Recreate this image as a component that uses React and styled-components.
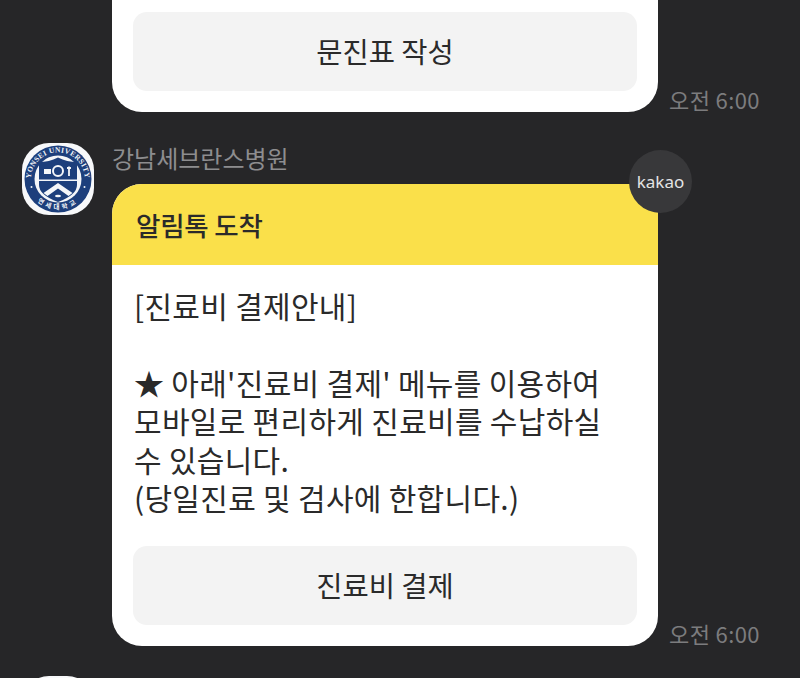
import React from "react";
import styled, { createGlobalStyle } from "styled-components";

const FONT = `"Noto Sans CJK KR", "Noto Sans", sans-serif`;

const GlobalStyle = createGlobalStyle`
  html, body {
    margin: 0;
    padding: 0;
    background: #262628;
  }
`;

function Seal() {
  return (
    <svg width="72" height="72" viewBox="0 0 72 72">
      <rect x="0" y="0" width="72" height="72" rx="27" fill="#f7f8fa" />
      <circle cx="36" cy="36" r="33.5" fill="#1d3f7c" />
      <circle cx="36" cy="36" r="23.5" fill="#f4f6f9" />
      <defs>
        <path id="sealTop" d="M9.4 41 A27 27 0 1 1 62.6 41" />
        <path id="sealBottom" d="M5.5 36 A30.5 30.5 0 0 0 66.5 36" />
      </defs>
      <text fontFamily="Liberation Serif, serif" fontSize="7.5" fontWeight="700" fill="#f4f6f9" letterSpacing="0.3">
        <textPath href="#sealTop" startOffset="50%" textAnchor="middle">YONSEI UNIVERSITY</textPath>
      </text>
      <text fontFamily="Noto Sans CJK KR, sans-serif" fontSize="6.5" fontWeight="700" fill="#f4f6f9" letterSpacing="3">
        <textPath href="#sealBottom" startOffset="50%" textAnchor="middle">연세대학교</textPath>
      </text>
      <circle cx="9.5" cy="44" r="1" fill="#f4f6f9" />
      <circle cx="62.5" cy="44" r="1" fill="#f4f6f9" />
      <path d="M17 19 Q27 19 36 14.5 Q45 19 55 19 V42 Q55 52 36 59 Q17 52 17 42 Z" fill="#1d3f7c" />
      <path d="M17 36.5 H55 V38 H17 Z" fill="#f4f6f9" />
      <path d="M21.5 50 L36 40 L50.5 50 L46.5 53 L36 45.5 L25.5 53 Z" fill="#f4f6f9" />
      <circle cx="36" cy="28" r="5" fill="none" stroke="#f4f6f9" strokeWidth="2" />
      <rect x="22" y="26" width="7" height="5" fill="#f4f6f9" />
      <path d="M47 23.5 V33 M45 25 H49" stroke="#f4f6f9" strokeWidth="1.8" fill="none" />
      <ellipse cx="36" cy="53" rx="3" ry="1.3" fill="#f4f6f9" />
    </svg>
  );
}

export default function App() {
  return (
    <>
      <GlobalStyle />
      <Page>
        <CutRow>
          <Bubble $cut>
            <Body>
              <ActionButton>문진표 작성</ActionButton>
            </Body>
          </Bubble>
          <Time>오전 6:00</Time>
        </CutRow>

        <MessageRow>
          <Avatar>
            <Seal />
          </Avatar>
          <Column>
            <Sender>강남세브란스병원</Sender>
            <BubbleLine>
              <Bubble>
                <Header>알림톡 도착</Header>
                <Body>
                  <Message>
                    [진료비 결제안내]
                    {"\n\n"}★ 아래'진료비 결제' 메뉴를 이용하여
                    {"\n"}모바일로 편리하게 진료비를 수납하실
                    {"\n"}수 있습니다.
                    {"\n"}(당일진료 및 검사에 한합니다.)
                  </Message>
                  <ActionButton>진료비 결제</ActionButton>
                </Body>
                <KakaoBadge>kakao</KakaoBadge>
              </Bubble>
              <Time>오전 6:00</Time>
            </BubbleLine>
          </Column>
        </MessageRow>

        <NextAvatar />
      </Page>
    </>
  );
}

const Page = styled.div`
  width: 800px;
  height: 678px;
  overflow: hidden;
  background: #262628;
  font-family: ${FONT};
  display: flex;
  flex-direction: column;
`;

const CutRow = styled.div`
  display: flex;
  align-items: flex-end;
  gap: 11px;
  padding-left: 112px;
`;

const MessageRow = styled.div`
  display: flex;
  align-items: flex-start;
  gap: 18px;
  padding: 31px 0 0 22px;
`;

const Avatar = styled.div`
  width: 72px;
  height: 72px;
  flex: none;
`;

const Column = styled.div`
  display: flex;
  flex-direction: column;
`;

const Sender = styled.div`
  height: 41px;
  font-size: 24px;
  line-height: 30px;
  color: #8d8d8f;
`;

const BubbleLine = styled.div`
  display: flex;
  align-items: flex-end;
  gap: 11px;
`;

const Bubble = styled.div`
  position: relative;
  width: 546px;
  flex: none;
  background: #fff;
  border-radius: ${(p) => (p.$cut ? "0 0 30px 30px" : "30px")};
`;

const Header = styled.div`
  height: 81px;
  box-sizing: border-box;
  padding: 0 24px;
  display: flex;
  align-items: center;
  background: #fae04a;
  border-radius: 30px 30px 0 0;
  font-size: 26.5px;
  font-weight: 500;
  color: #2a2a2a;
  letter-spacing: -0.2px;
`;

const Body = styled.div`
  padding: 12px 21px 21px;
  display: flex;
  flex-direction: column;
`;

const Message = styled.div`
  padding: 9px 1px 30px;
  font-size: 30px;
  line-height: 38.4px;
  color: #2a2a2a;
  white-space: pre-wrap;
  letter-spacing: 0.3px;
`;

const ActionButton = styled.div`
  height: 79px;
  box-sizing: border-box;
  padding-bottom: 3px;
  flex: none;
  display: flex;
  align-items: center;
  justify-content: center;
  background: #f3f3f3;
  border-radius: 14px;
  font-size: 28.5px;
  color: #2a2a2a;
`;

const Time = styled.div`
  padding-bottom: 3px;
  font-size: 22px;
  line-height: 20px;
  color: #7c7c7e;
  white-space: nowrap;
  letter-spacing: 0.4px;
`;

const KakaoBadge = styled.div`
  position: absolute;
  top: -34px;
  right: -34px;
  width: 63px;
  height: 63px;
  border-radius: 50%;
  background: #38383a;
  display: flex;
  align-items: center;
  justify-content: center;
  font-family: "Noto Sans", sans-serif;
  font-size: 17px;
  color: #e4e4e4;
`;

const NextAvatar = styled.div`
  margin: 30px 0 0 22px;
  width: 72px;
  height: 72px;
  flex: none;
  border-radius: 27px;
  background: #f7f8fa;
`;
